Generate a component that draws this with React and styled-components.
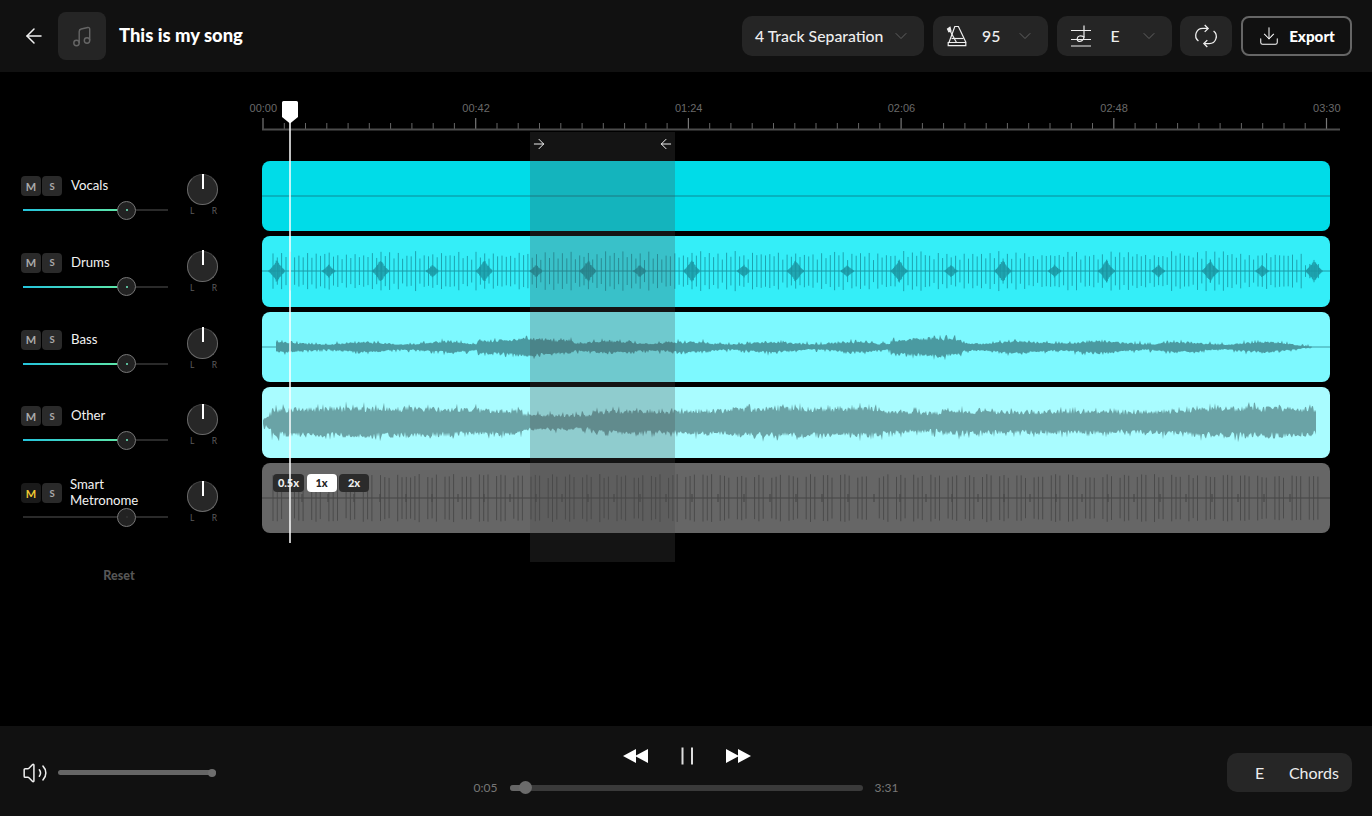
import React from "react";
import styled, { createGlobalStyle } from "styled-components";
import { ArrowLeft, ArrowRight, ChevronDown, Download, Volume2 } from "lucide-react";

const GlobalStyle = createGlobalStyle`
  html, body {
    margin: 0;
    padding: 0;
    background: #000;
    color: #fff;
    font-family: "Lato", "Noto Sans", sans-serif;
  }
  * { box-sizing: border-box; }
`;

const channels = [
  { name: "Vocals", level: 71.7, fill: true },
  { name: "Drums", level: 71.7, fill: true },
  { name: "Bass", level: 71.7, fill: true },
  { name: "Other", level: 71.7, fill: true },
  { name: "Smart Metronome", level: 71.7, fill: false, muted: true },
];

const rulerLabels = ["00:00", "00:42", "01:24", "02:06", "02:48", "03:30"];

function seeded(seed) {
  let a = seed;
  return () => {
    a = (a + 0x6d2b79f5) | 0;
    let t = Math.imul(a ^ (a >>> 15), 1 | a);
    t = (t + Math.imul(t ^ (t >>> 7), 61 | t)) ^ t;
    return ((t ^ (t >>> 14)) >>> 0) / 4294967296;
  };
}

const CY = 35;

function drumPaths() {
  const rand = seeded(11);
  let lines = "";
  for (let x = 11; x < 1060; x += 4.32) {
    const i = Math.floor((x - 11) / 4.32);
    const h = (i % 2 === 0 ? 15 : 11) + rand() * 5;
    const edge = x > 1040 ? 0.45 : 1;
    lines += `M${x.toFixed(1)} ${(CY - h * edge).toFixed(1)}V${(CY + h * edge).toFixed(1)}`;
  }
  // kick hits: dense little bursts that swell around each beat
  let blobs = "";
  for (let i = 0; i < 21; i++) {
    const c = 15 + i * 51.85;
    const big = i % 2 === 0;
    const size = big ? 11 : 6;
    const w = big ? 8 : 6;
    for (let x = c - w; x <= c + w; x += 0.8) {
      const fall = 1 - Math.abs(x - c) / w;
      const h = size * Math.pow(fall, 1.3) * (0.75 + rand() * 0.25) + 1;
      blobs += `M${x.toFixed(1)} ${(CY - h).toFixed(1)}V${(CY + h).toFixed(1)}`;
    }
  }
  return { lines, blobs };
}

function envelopeShape(seed, from, to, amp, jitter) {
  const rand = seeded(seed);
  let top = "";
  let bottom = "";
  for (let x = from; x <= to; x += 1) {
    const a = amp(x);
    const up = a * (0.62 + rand() * 0.38) + (rand() > 0.75 ? rand() * jitter : 0);
    const down = a * (0.62 + rand() * 0.38) + (rand() > 0.75 ? rand() * jitter : 0);
    top += `${top ? "L" : "M"}${x} ${(CY - up).toFixed(1)}`;
    bottom = `L${x} ${(CY + down).toFixed(1)}` + bottom;
  }
  return top + bottom + "Z";
}

const bassAmp = (x) => {
  let a = 4.5 + Math.sin(x / 13) * 1.4;
  if (x > 215 && x < 310) a += 4;
  if (x > 300 && x < 420) a += 1;
  if (x > 628 && x < 700) a += 5;
  if (x >= 700 && x < 880) a += 1;
  if (x > 1030) a *= (1050 - x) / 20;
  return Math.max(a, 0.5);
};

const otherAmp = (x) => {
  let a = 14 + Math.sin(x / 70) * 2;
  if (x < 10) a = 1 + x * 0.9;
  if (x > 260 && x < 330) a -= 4;
  if (x > 400 && x < 470) a -= 1;
  if (x > 620 && x < 680) a -= 3;
  if (x > 850 && x < 930) a -= 2;
  if (x > 1050) a -= 2;
  return a;
};

function metronomePaths() {
  const rand = seeded(5);
  let lines = "";
  for (let x = 11; x < 1058; x += 4.3) {
    const skip = Math.floor((x - 11) / 4.3) % 4 === 3;
    if (skip) continue;
    const h = 20 + rand() * 4;
    lines += `M${x.toFixed(1)} ${(CY - h).toFixed(1)}V${(CY + h).toFixed(1)}`;
  }
  let blips = "";
  for (let x = 40; x < 1050; x += 26) {
    blips += `M${x} ${CY - 4}V${CY + 4}`;
  }
  return { lines, blips };
}

const drums = drumPaths();
const metronome = metronomePaths();
const bassShape = envelopeShape(21, 14, 1050, bassAmp, 3);
const otherShape = envelopeShape(33, 1, 1054, otherAmp, 5);

function rulerTicks() {
  let minor = "";
  let major = "";
  for (let i = 0; i <= 50; i++) {
    const x = 1 + i * 21.27;
    if (i % 10 === 0) major += `M${x.toFixed(1)} 16V27`;
    else minor += `M${x.toFixed(1)} 21V27`;
  }
  return { minor, major };
}
const ticks = rulerTicks();

const Page = styled.div`
  width: 100%;
  height: 100vh;
  min-height: 816px;
  display: flex;
  flex-direction: column;
  background: #000;
  overflow: hidden;
`;

const TopBar = styled.header`
  height: 72px;
  flex: none;
  display: flex;
  align-items: center;
  justify-content: space-between;
  padding: 0 20px 0 22px;
  background: #111;
`;

const TopGroup = styled.div`
  display: flex;
  align-items: center;
`;

const BackButton = styled.button`
  width: 24px;
  height: 24px;
  padding: 0;
  display: flex;
  align-items: center;
  justify-content: center;
  background: none;
  border: 0;
  color: #f2f2f2;
`;

const Cover = styled.div`
  width: 48px;
  height: 48px;
  margin-left: 12px;
  border-radius: 8px;
  background: #252525;
  display: flex;
  align-items: center;
  justify-content: center;
`;

const SongTitle = styled.h1`
  margin: 0 0 2px 13px;
  font-size: 18.4px;
  font-weight: 900;
  color: #fff;
`;

const Controls = styled.div`
  display: flex;
  align-items: center;
  gap: 8.75px;
`;

const Pill = styled.div`
  height: 40px;
  width: ${(p) => p.$width}px;
  padding: 0 ${(p) => p.$pad || 13}px;
  display: flex;
  align-items: center;
  justify-content: space-between;
  border-radius: 10px;
  background: #252525;
  color: #eee;
  font-size: 15.8px;
`;

const PillValue = styled.span`
  flex: 1;
  margin-bottom: 2px;
  text-align: ${(p) => (p.$left ? "left" : "center")};
  font-weight: 500;
`;

const ExportButton = styled.button`
  width: 111px;
  height: 40px;
  display: flex;
  align-items: center;
  justify-content: center;
  gap: 9px;
  padding: 0;
  border: 2px solid #666;
  border-radius: 8px;
  background: #111;
  color: #fff;
  font-family: inherit;
  font-size: 15.2px;
  font-weight: 900;
`;

const Workspace = styled.main`
  flex: 1;
  display: flex;
  min-height: 0;
`;

const Mixer = styled.aside`
  width: 262px;
  flex: none;
  padding: 104px 0 0 21px;
`;

const ChannelRow = styled.div`
  height: 76.8px;
  display: flex;
  align-items: flex-start;
`;

const ChannelMain = styled.div`
  width: 147px;
`;

const ChannelHead = styled.div`
  height: 20px;
  display: flex;
  align-items: center;
  gap: 1px;
`;

const SquareButton = styled.button`
  width: 20px;
  height: 20px;
  padding: 0;
  border: 0;
  border-radius: 4px;
  background: ${(p) => (p.$active ? "#1a1a1a" : "#2a2a2a")};
  color: ${(p) => (p.$active ? "#f0c832" : "#aaa")};
  font-family: inherit;
  font-size: ${(p) => (p.$small ? 9.5 : 11)}px;
  font-weight: 700;
`;

const ChannelName = styled.span`
  margin: 0 0 2px ${(p) => (p.$tight ? 7 : 8)}px;
  width: 80px;
  font-size: 13.2px;
  line-height: 16px;
  color: #f2f2f2;
`;

const SliderTrack = styled.div`
  position: relative;
  height: 2px;
  width: 145px;
  margin: 13px 0 0 2px;
  background: #2a2a2a;
`;

const SliderFill = styled.div`
  height: 100%;
  background: linear-gradient(90deg, #25c4dc, #62e9a5);
`;

const SliderKnob = styled.div`
  position: absolute;
  top: -8.5px;
  width: 19px;
  height: 19px;
  margin-left: -9.5px;
  border-radius: 50%;
  border: 1px solid #777;
  background: #222;
  display: flex;
  align-items: center;
  justify-content: center;

  &::after {
    content: "";
    width: 2px;
    height: 2px;
    border-radius: 50%;
    background: ${(p) => (p.$lit ? "#6cecc0" : "#333")};
  }
`;

const PanColumn = styled.div`
  width: 31px;
  margin: -2px 0 0 19px;
`;

const PanKnob = styled.div`
  position: relative;
  width: 31px;
  height: 31px;
  border-radius: 50%;
  background: #272727;
  border: 1.5px solid #6a6a6a;
  border-top-color: #444;

  &::after {
    content: "";
    position: absolute;
    top: -1.5px;
    left: 50%;
    width: 2px;
    height: 15px;
    margin-left: -1px;
    background: #fff;
  }
`;

const PanLabels = styled.div`
  display: flex;
  justify-content: space-between;
  padding: 1px 1px 0 3px;
  font-size: 8.5px;
  line-height: 10px;
  color: #5c5c5c;
`;

const ResetButton = styled.button`
  display: block;
  width: 60px;
  margin: 8px 0 0 68px;
  padding: 0;
  border: 0;
  background: none;
  color: #565656;
  font-family: inherit;
  font-size: 12.5px;
  font-weight: 900;
  text-align: center;
`;

const Timeline = styled.section`
  position: relative;
  flex: 1 1 0;
  min-width: 0;
  padding: 28px 42px 0 0;
`;

const RulerLabels = styled.div`
  display: flex;
  margin-left: -105px;
  height: 16px;
`;

const RulerLabel = styled.span`
  width: 212.7px;
  flex: none;
  text-align: center;
  font-family: "Liberation Sans", sans-serif;
  font-size: 11px;
  line-height: 16px;
  color: #6a6a6a;
`;

const RulerSvg = styled.svg`
  display: block;
  width: 1078px;
  height: 29px;
  margin-top: -14px;
`;

const TrackList = styled.div`
  display: grid;
  gap: 5.3px;
  margin-top: 30px;
`;

const Track = styled.div`
  position: relative;
  height: 70.2px;
  border-radius: 8px;
  overflow: hidden;
  background: ${(p) => p.$color};
`;

const Wave = styled.svg`
  display: block;
  width: 100%;
  height: 100%;
`;

const SpeedGroup = styled.div`
  position: absolute;
  top: 11px;
  left: 11px;
  display: flex;
  gap: 2.5px;
`;

const SpeedButton = styled.button`
  height: 18px;
  width: ${(p) => p.$width}px;
  padding: 0;
  border: 0;
  border-radius: 4px;
  background: ${(p) => (p.$active ? "#fff" : "#2b2b2b")};
  color: ${(p) => (p.$active ? "#222" : "#eee")};
  font-family: inherit;
  font-size: 11px;
  font-weight: 900;
`;

const LoopRegion = styled.div`
  position: absolute;
  top: 60px;
  left: 268px;
  width: 145px;
  height: 430px;
  background: rgba(74, 74, 74, 0.27);
`;

const LoopHandles = styled.div`
  display: flex;
  justify-content: space-between;
  align-items: center;
  height: 24px;
  padding: 0 1px;
  color: #fff;
`;

const Playhead = styled.div`
  position: absolute;
  top: 29px;
  left: 20px;
  width: 16px;
  height: 442px;
  display: flex;
  flex-direction: column;
  align-items: center;
`;

const PlayheadLine = styled.div`
  flex: 1;
  width: 1.5px;
  margin-top: -2px;
  background: rgba(255, 255, 255, 0.75);
`;

const BottomBar = styled.footer`
  height: 90px;
  flex: none;
  display: grid;
  grid-template-columns: 1fr auto 1fr;
  padding: 0 20px 0 22px;
  background: #111;
`;

const VolumeGroup = styled.div`
  display: flex;
  align-items: center;
  gap: 10px;
  margin-top: 3px;
`;

const VolumeTrack = styled.div`
  position: relative;
  width: 158px;
  height: 5px;
  border-radius: 3px;
  background: #666;

  &::after {
    content: "";
    position: absolute;
    right: 0;
    top: -1.5px;
    width: 8px;
    height: 8px;
    border-radius: 50%;
    background: #6e6e6e;
  }
`;

const Transport = styled.div`
  display: flex;
  flex-direction: column;
  align-items: center;
  padding-top: 19px;
`;

const TransportButtons = styled.div`
  display: flex;
  align-items: center;
  gap: 33px;
  height: 22px;
  margin-left: -1px;
`;

const IconButton = styled.button`
  display: flex;
  padding: 0;
  border: 0;
  background: none;
`;

const Progress = styled.div`
  display: flex;
  align-items: center;
  gap: 12px;
  margin-top: 13px;
  font-size: 12px;
  color: #777;
`;

const ProgressTime = styled.span`
  width: ${(p) => p.$width}px;
`;

const ProgressTrack = styled.div`
  position: relative;
  width: 353px;
  height: 6px;
  border-radius: 3px;
  background: #3a3a3a;
`;

const ProgressFill = styled.div`
  height: 100%;
  border-radius: 3px;
  background: #666;
`;

const ProgressKnob = styled.div`
  position: absolute;
  top: -3.5px;
  width: 13px;
  height: 13px;
  margin-left: -6.5px;
  border-radius: 50%;
  background: #6b6b6b;
`;

const ChordSide = styled.div`
  display: flex;
  justify-content: flex-end;
  align-items: center;
  margin-top: 3px;
`;

const ChordButton = styled.button`
  width: 125px;
  height: 39px;
  padding: 0 13px 0 28px;
  display: flex;
  align-items: center;
  justify-content: space-between;
  border: 0;
  border-radius: 10px;
  background: #262626;
  color: #eee;
  font-family: inherit;
  font-size: 16px;
  font-weight: 400;
`;

function MusicIcon() {
  return (
    <svg width="24" height="24" viewBox="0 0 24 24" fill="none" stroke="#666" strokeWidth="1.4">
      <circle cx="6.5" cy="19" r="2.7" />
      <circle cx="17" cy="16.5" r="2.7" />
      <path d="M9.2 19V7.5C9.2 6 10 5.3 11.2 5l6.6-1.5c1-.2 1.9.3 1.9 1.6v11.4" />
    </svg>
  );
}

function MetronomeIcon() {
  return (
    <svg width="22" height="24" viewBox="0 0 22 24" fill="none" stroke="#eee" strokeWidth="1.2">
      <path d="M3 18.5 8.8 2.5h3.6L20 18.5" />
      <path d="M2.2 18.5h17.6v3.2H2.2z" />
      <path d="M10.5 18.5 2.8 4.5" />
      <path d="M1.5 5 4 3.2 5 7 2.8 7.8z" fill="#eee" />
      <path d="M5.5 14.5h12" />
    </svg>
  );
}

function ChordIcon() {
  return (
    <svg width="22" height="24" viewBox="0 0 22 24" fill="none" stroke="#eee" strokeWidth="1.2">
      <path d="M1 6.5h20M1 15.5h20M1 22h20" />
      <path d="M14 1.5V13.5" />
      <path d="M14 13c0 3.2-3 4.8-5.2 4.3C6.4 16.8 6.8 12.5 9.5 12c2.2-.4 3.5.4 4.5 1z" />
    </svg>
  );
}

function LoopIcon() {
  return (
    <svg width="26" height="26" viewBox="0 0 24 24" fill="none" stroke="#eee" strokeWidth="1.2">
      <path d="M13.5 5H9a6.5 6.5 0 0 0-4 11.6" />
      <path d="M10.5 19H15a6.5 6.5 0 0 0 4-11.6" />
      <path d="M10.8 1.8 14 5l-3.2 3.2" />
      <path d="M13.2 15.8 10 19l3.2 3.2" />
    </svg>
  );
}

function RewindIcon() {
  return (
    <svg width="25" height="16" viewBox="0 0 25 16" fill="#fff">
      <path d="M0 8 13 1v14zM12 8 25 1v14z" />
    </svg>
  );
}

function ForwardIcon() {
  return (
    <svg width="25" height="16" viewBox="0 0 25 16" fill="#fff">
      <path d="M0 1l13 7-13 7zM12 1l13 7-13 7z" />
    </svg>
  );
}

function PauseIcon() {
  return (
    <svg width="12" height="18" viewBox="0 0 12 18" fill="#ddd">
      <rect x="0.5" y="0.5" width="2" height="17" />
      <rect x="10" y="0.5" width="2" height="17" />
    </svg>
  );
}

function Channel({ channel }) {
  const twoLines = channel.name.includes(" ");
  return (
    <ChannelRow>
      <ChannelMain>
        <ChannelHead>
          <SquareButton $active={channel.muted}>M</SquareButton>
          <SquareButton $small>S</SquareButton>
          <ChannelName $tight={twoLines}>{channel.name}</ChannelName>
        </ChannelHead>
        <SliderTrack>
          {channel.fill && <SliderFill style={{ width: `${channel.level}%` }} />}
          <SliderKnob $lit={channel.fill} style={{ left: `${channel.level}%` }} />
        </SliderTrack>
      </ChannelMain>
      <PanColumn>
        <PanKnob />
        <PanLabels>
          <span>L</span>
          <span>R</span>
        </PanLabels>
      </PanColumn>
    </ChannelRow>
  );
}

function CenterLine({ color }) {
  return <path d={`M0 ${CY}H1068`} stroke={color} strokeWidth="1" fill="none" />;
}

export default function App() {
  return (
    <Page>
      <GlobalStyle />
      <TopBar>
        <TopGroup>
          <BackButton>
            <ArrowLeft size={24} strokeWidth={1.5} />
          </BackButton>
          <Cover>
            <MusicIcon />
          </Cover>
          <SongTitle>This is my song</SongTitle>
        </TopGroup>
        <Controls>
          <Pill $width={182}>
            <PillValue $left>4 Track Separation</PillValue>
            <ChevronDown size={20} strokeWidth={1.1} color="#666" />
          </Pill>
          <Pill $width={115}>
            <MetronomeIcon />
            <PillValue>95</PillValue>
            <ChevronDown size={20} strokeWidth={1.1} color="#666" />
          </Pill>
          <Pill $width={115}>
            <ChordIcon />
            <PillValue>E</PillValue>
            <ChevronDown size={20} strokeWidth={1.1} color="#666" />
          </Pill>
          <Pill $width={52}>
            <LoopIcon />
          </Pill>
          <ExportButton>
            <Download size={22} strokeWidth={1.1} />
            Export
          </ExportButton>
        </Controls>
      </TopBar>

      <Workspace>
        <Mixer>
          {channels.map((channel) => (
            <Channel key={channel.name} channel={channel} />
          ))}
          <ResetButton>Reset</ResetButton>
        </Mixer>

        <Timeline>
          <RulerLabels>
            {rulerLabels.map((label) => (
              <RulerLabel key={label}>{label}</RulerLabel>
            ))}
          </RulerLabels>
          <RulerSvg viewBox="0 0 1078 29">
            <path d={ticks.minor} stroke="#666" strokeWidth="1" />
            <path d={ticks.major} stroke="#777" strokeWidth="1.2" />
            <path d="M0 27.5H1078" stroke="#4c4c4c" strokeWidth="2" />
          </RulerSvg>

          <TrackList>
            <Track $color="#00dce8">
              <Wave viewBox="0 0 1068 70" preserveAspectRatio="none">
                <CenterLine color="#0c8a95" />
              </Wave>
            </Track>
            <Track $color="#34eef8">
              <Wave viewBox="0 0 1068 70" preserveAspectRatio="none">
                <CenterLine color="#1a9aa6" />
                <path d={drums.lines} stroke="#1c9ba8" strokeWidth="0.9" fill="none" />
                <path d={drums.blobs} stroke="#1c95a2" strokeWidth="0.9" fill="none" />
              </Wave>
            </Track>
            <Track $color="#7df9ff">
              <Wave viewBox="0 0 1068 70" preserveAspectRatio="none">
                <CenterLine color="#3f9ea6" />
                <path d={bassShape} fill="#4a9aa1" />
              </Wave>
            </Track>
            <Track $color="#a9fcff">
              <Wave viewBox="0 0 1068 70" preserveAspectRatio="none">
                <path d={otherShape} fill="#6aa3a6" />
              </Wave>
            </Track>
            <Track $color="#666666">
              <Wave viewBox="0 0 1068 70" preserveAspectRatio="none">
                <CenterLine color="#444" />
                <path d={metronome.lines} stroke="#484848" strokeWidth="0.9" fill="none" />
                <path d={metronome.blips} stroke="#484848" strokeWidth="1.2" fill="none" />
              </Wave>
              <SpeedGroup>
                <SpeedButton $width={31}>0.5x</SpeedButton>
                <SpeedButton $width={30} $active>
                  1x
                </SpeedButton>
                <SpeedButton $width={30}>2x</SpeedButton>
              </SpeedGroup>
            </Track>
          </TrackList>

          <LoopRegion>
            <LoopHandles>
              <ArrowRight size={16} strokeWidth={1.4} />
              <ArrowLeft size={16} strokeWidth={1.4} />
            </LoopHandles>
          </LoopRegion>

          <Playhead>
            <svg width="16" height="23" viewBox="0 0 16 23" fill="#fff">
              <path d="M1.5 0h13A1.5 1.5 0 0 1 16 1.5V16l-8 6.5L0 16V1.5A1.5 1.5 0 0 1 1.5 0z" />
            </svg>
            <PlayheadLine />
          </Playhead>
        </Timeline>
      </Workspace>

      <BottomBar>
        <VolumeGroup>
          <Volume2 size={26} strokeWidth={1.4} color="#eee" />
          <VolumeTrack />
        </VolumeGroup>
        <Transport>
          <TransportButtons>
            <IconButton>
              <RewindIcon />
            </IconButton>
            <IconButton>
              <PauseIcon />
            </IconButton>
            <IconButton>
              <ForwardIcon />
            </IconButton>
          </TransportButtons>
          <Progress>
            <ProgressTime $width={24}>0:05</ProgressTime>
            <ProgressTrack>
              <ProgressFill style={{ width: "4.4%" }} />
              <ProgressKnob style={{ left: "4.4%" }} />
            </ProgressTrack>
            <ProgressTime $width={26}>3:31</ProgressTime>
          </Progress>
        </Transport>
        <ChordSide>
          <ChordButton>
            <span>E</span>
            <span>Chords</span>
          </ChordButton>
        </ChordSide>
      </BottomBar>
    </Page>
  );
}
